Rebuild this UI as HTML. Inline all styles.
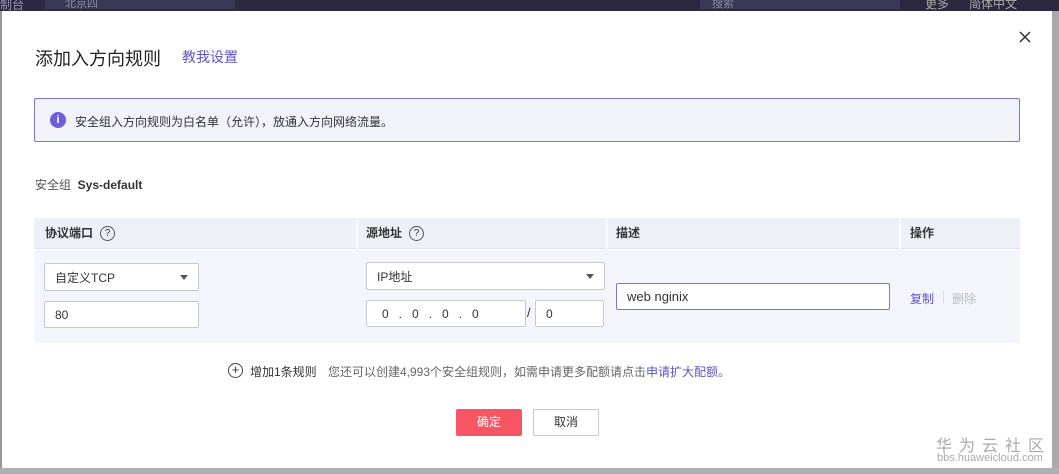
<!DOCTYPE html>
<html><head><meta charset="utf-8"><style>
*{margin:0;padding:0;box-sizing:border-box}
body{width:1059px;height:474px;overflow:hidden;background:#8a8a90;font-family:"Liberation Sans","Noto Sans CJK SC",sans-serif;color:#333;position:relative;font-size:12px}
.a{position:absolute}
.top{left:0;top:0;width:1059px;height:11px;background:#2b2840}
.modal{left:2px;top:11px;width:1050px;height:457px;background:#fff}
.inp{position:absolute;background:#fff;border:1px solid #c8c8cc;border-radius:2px;font-size:12px;color:#333;padding-left:10px;display:flex;align-items:center}
.tri{position:absolute;right:10px;top:11px;width:0;height:0;border-left:4px solid transparent;border-right:4px solid transparent;border-top:5px solid #555}
.q{display:inline-block;width:15px;height:15px;border:1.3px solid #555;border-radius:50%;font-size:10px;text-align:center;line-height:13px;font-weight:normal;margin-left:7px;vertical-align:middle}
.th{position:absolute;top:218px;height:31px;font-weight:bold;font-size:12px;line-height:31px;color:#333}
</style></head><body>
<div class="a top"></div>
<div class="a" style="left:0;top:0;font-size:12px;color:#9a98b0;line-height:10px">制台</div>
<div class="a" style="left:45px;top:0;width:190px;height:9px;background:#3b3856;color:#8a88a0;font-size:11px;line-height:8px;padding-left:20px">北京四</div>
<div class="a" style="left:700px;top:0;width:200px;height:9px;background:#3b3856;color:#8a88a0;font-size:11px;line-height:8px;padding-left:12px">搜索</div>
<div class="a" style="left:925px;top:0;color:#aaa;font-size:12px;line-height:8px">更多 &nbsp;&nbsp;&nbsp;&nbsp; 简体中文</div>
<div class="a modal"></div>
<div class="a" style="left:1052px;top:11px;width:7px;height:457px;background:#a9a9ae"></div>
<div class="a" style="left:0;top:468px;width:1059px;height:6px;background:#b0b0b4"></div>
<div class="a" style="left:0;top:11px;width:2px;height:457px;background:#999"></div>

<div class="a" style="left:35px;top:45px;font-size:18px;color:#222">添加入方向规则</div>
<div class="a" style="left:182px;top:47px;font-size:14px;color:#5e54c8">教我设置</div>
<svg class="a" style="left:1019px;top:31px" width="12" height="12"><path d="M1 1L11 11M11 1L1 11" stroke="#333" stroke-width="1.5"/></svg>

<div class="a" style="left:34px;top:98px;width:986px;height:44px;background:#f2f2fb;border:1px solid #7d72d8;border-radius:2px"></div>
<div class="a" style="left:50px;top:112px;width:16px;height:16px;border-radius:50%;background:#6a5fd6;color:#fff;font-size:11px;font-weight:bold;text-align:center;line-height:16px">i</div>
<div class="a" style="left:75px;top:113px;font-size:12px;color:#333">安全组入方向规则为白名单（允许），放通入方向网络流量。</div>

<div class="a" style="left:35px;top:176px;font-size:12px;color:#555">安全组 &nbsp;<b style="color:#333">Sys-default</b></div>

<div class="a" style="left:34px;top:218px;width:986px;height:31px;background:#eef0f8;border-bottom:1px solid #dfe1ee"></div>
<div class="a" style="left:34px;top:250px;width:986px;height:93px;background:#f4f5fc"></div>
<div class="a" style="left:356px;top:218px;width:2px;height:31px;background:#f9f9fc"></div>
<div class="a" style="left:606px;top:218px;width:2px;height:31px;background:#f9f9fc"></div>
<div class="a" style="left:899px;top:218px;width:2px;height:31px;background:#f9f9fc"></div>
<div class="th" style="left:45px">协议端口<span class="q">?</span></div>
<div class="th" style="left:366px">源地址<span class="q">?</span></div>
<div class="th" style="left:616px">描述</div>
<div class="th" style="left:910px">操作</div>

<div class="inp" style="left:44px;top:263px;width:155px;height:28px">自定义TCP<span class="tri"></span></div>
<div class="inp" style="left:44px;top:301px;width:155px;height:27px">80</div>
<div class="inp" style="left:366px;top:262px;width:239px;height:28px">IP地址<span class="tri"></span></div>
<div class="inp" style="left:366px;top:300px;width:160px;height:27px;padding-left:15px;word-spacing:0">0 &nbsp;&nbsp;. &nbsp;&nbsp;0 &nbsp;&nbsp;. &nbsp;&nbsp;0 &nbsp;&nbsp;. &nbsp;&nbsp;0</div>
<div class="a" style="left:527px;top:305px;font-size:13px">/</div>
<div class="inp" style="left:535px;top:300px;width:69px;height:27px">0</div>
<div class="inp" style="left:616px;top:283px;width:274px;height:27px;border-color:#7d72d8;font-size:13px">web nginix</div>
<div class="a" style="left:910px;top:290px;color:#5e54c8">复制</div>
<div class="a" style="left:943px;top:291px;width:1px;height:12px;background:#ddd"></div>
<div class="a" style="left:952px;top:290px;color:#bbb">删除</div>

<div class="a" style="left:228px;top:363px;width:15px;height:15px;border:1.3px solid #444;border-radius:50%;font-size:13px;line-height:12px;text-align:center">+</div>
<div class="a" style="left:250px;top:363px;color:#333">增加1条规则</div>
<div class="a" style="left:328px;top:363px;color:#666">您还可以创建4,993个安全组规则，如需申请更多配额请点击<span style="color:#5e54c8">申请扩大配额</span>。</div>

<div class="a" style="left:456px;top:409px;width:66px;height:27px;background:#f65563;border-radius:2px;color:#fff;text-align:center;line-height:27px">确定</div>
<div class="a" style="left:533px;top:409px;width:66px;height:27px;background:#fff;border:1px solid #c8c8cc;border-radius:2px;color:#333;text-align:center;line-height:25px">取消</div>

<div class="a" style="left:936px;top:432px;font-size:16px;color:#aaa;letter-spacing:7px">华为云社区</div>
<div class="a" style="left:937px;top:452px;font-size:11px;color:#aaa">bbs.huaweicloud.com</div>
</body></html>
